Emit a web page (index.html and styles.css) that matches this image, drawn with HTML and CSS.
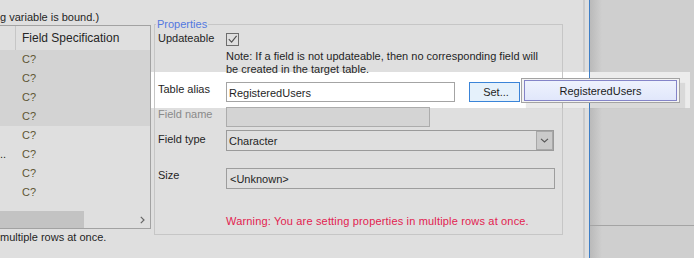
FILE: index.html
```html
<!DOCTYPE html>
<html>
<head>
<meta charset="utf-8">
<link rel="stylesheet" href="styles.css">
</head>
<body>
<div class="screen">
  <div class="dialog">
    <div class="content">
      <div class="left">
        <div class="hint">g variable is bound.)</div>
        <div class="table">
          <div class="thead"><div class="c1"></div><div class="c2">Field Specification</div></div>
          <div class="tr sel"><div class="c1"></div><div class="c2">C?</div></div>
          <div class="tr sel"><div class="c1"></div><div class="c2">C?</div></div>
          <div class="tr sel"><div class="c1"></div><div class="c2">C?</div></div>
          <div class="tr sel"><div class="c1"></div><div class="c2">C?</div></div>
          <div class="tr"><div class="c1"></div><div class="c2">C?</div></div>
          <div class="tr"><div class="c1">..</div><div class="c2">C?</div></div>
          <div class="tr"><div class="c1"></div><div class="c2">C?</div></div>
          <div class="tr"><div class="c1"></div><div class="c2">C?</div></div>
          <div class="filler"></div>
          <div class="hscroll">
            <div class="thumb"></div>
            <svg class="arrow" width="5" height="8" viewBox="0 0 5 8"><path d="M0.8 0.8 L4 4 L0.8 7.2" fill="none" stroke="#666" stroke-width="1.2"/></svg>
          </div>
        </div>
        <div class="status">multiple rows at once.</div>
      </div>
      <fieldset class="props">
        <legend>Properties</legend>
        <div class="row r-upd">
          <span class="lbl">Updateable</span>
          <span class="chk"><svg width="11" height="11" viewBox="0 0 11 11"><path d="M1.8 5.2 L4.6 8.2 L9.6 1.8" fill="none" stroke="#505050" stroke-width="1.1"/></svg></span>
        </div>
        <div class="row r-note">
          <span></span>
          <p class="note">Note: If a field is not updateable, then no corresponding field will<br>be created in the target table.</p>
        </div>
        <div class="row r-alias">
          <span class="lbl">Table alias</span>
          <div class="ctrl">
            <div class="input alias">RegisteredUsers</div>
            <div class="btn">Set...</div>
          </div>
        </div>
        <div class="row r-name">
          <span class="lbl dis">Field name</span>
          <div class="input disabled"></div>
        </div>
        <div class="row r-type">
          <span class="lbl">Field type</span>
          <div class="combo">
            <span class="val">Character</span>
            <span class="drop"><svg width="9" height="5" viewBox="0 0 9 5"><path d="M1 0.8 L4.5 4 L8 0.8" fill="none" stroke="#555" stroke-width="1.1"/></svg></span>
          </div>
        </div>
        <div class="row r-size">
          <span class="lbl">Size</span>
          <div class="input size">&lt;Unknown&gt;</div>
        </div>
        <div class="row r-warn">
          <span></span>
          <p class="warn">Warning: You are setting properties in multiple rows at once.</p>
        </div>
      </fieldset>
    </div>
    <div class="splitter"></div>
    <div class="edge"></div>
  </div>
  <div class="backwin">
    <div class="bw-top"></div>
    <div class="bw-bottom"></div>
  </div>
</div>
<div class="spotlight"></div>
<div class="popup"><div class="popup-inner">RegisteredUsers</div></div>
</body>
</html>
```

FILE: styles.css
```css
html, body {
  margin: 0;
  padding: 0;
}
body {
  width: 694px;
  height: 258px;
  overflow: hidden;
  position: relative;
  font-family: "Liberation Sans", Arial, sans-serif;
  font-size: 11px;
  color: #1f1f1f;
}
.screen {
  display: flex;
  width: 694px;
  height: 258px;
  background: #dfdfdf;
}
.dialog {
  display: flex;
  flex: none;
  width: 590px;
}
.content {
  position: relative;
  z-index: 1;
  width: 583px;
  flex: none;
  display: grid;
  grid-template-columns: 151px 409px;
  column-gap: 3px;
  align-items: start;
}
.splitter {
  width: 2px;
  background: #cbcbcb;
  flex: none;
}
.edge {
  width: 1px;
  margin-left: 4px;
  background: #3f7fc6;
  position: relative;
  z-index: 1;
  flex: none;
}
.backwin {
  flex: 1;
  display: flex;
  flex-direction: column;
  background: linear-gradient(to right, #bababa, #cfcfcf 12px);
}
.bw-top {
  height: 225px;
  border-bottom: 1px solid #a4a4a4;
  flex: none;
}
.bw-bottom {
  flex: 1;
}

/* left table */
.left {
  display: flex;
  flex-direction: column;
}
.hint {
  padding-top: 9px;
  height: 16px;
  line-height: 16px;
  white-space: nowrap;
}
.table {
  height: 204px;
  box-sizing: border-box;
  border: 1px solid #a2a2a2;
  border-left: 0;
  display: flex;
  flex-direction: column;
}
.thead {
  height: 24px;
  line-height: 24px;
  display: flex;
  flex: none;
  color: #262626;
  font-size: 12px;
}
.thead .c1 {
  width: 15px;
  border-right: 1px solid #c6c6c6;
}
.thead .c2 {
  padding-left: 6px;
  white-space: nowrap;
}
.tr {
  height: 19px;
  line-height: 19px;
  display: flex;
  flex: none;
}
.tr.sel {
  background: #d3d3d3;
}
.tr .c1 {
  width: 16px;
  overflow: hidden;
  white-space: nowrap;
}
.tr .c2 {
  padding-left: 6px;
  color: #5e5634;
}
.filler {
  flex: 1;
}
.hscroll {
  height: 17px;
  flex: none;
  display: flex;
  align-items: center;
  justify-content: space-between;
}
.thumb {
  width: 84px;
  height: 17px;
  background: #c3c3c3;
}
.arrow {
  margin-right: 5px;
}
.status {
  height: 16px;
  line-height: 16px;
  white-space: nowrap;
}

/* properties */
.props {
  margin: 17px 0 0 0;
  padding: 0 0 6px 3px;
  border: 1px solid #c6c6c6;
  width: 409px;
  box-sizing: border-box;
  min-inline-size: 0;
}
.props legend {
  padding: 0 1px;
  margin-left: -2px;
  line-height: 14px;
  color: #5378e0;
}
.row {
  display: grid;
  grid-template-columns: 68px auto;
  align-items: start;
}
.lbl {
  line-height: 14px;
  white-space: nowrap;
}
.lbl.dis {
  color: #8a8a8a;
}
.r-upd {
  height: 16px;
}
.chk {
  display: block;
  width: 13px;
  height: 13px;
  box-sizing: border-box;
  border: 1px solid #6d6d6d;
  margin-top: 2px;
}
.chk svg {
  display: block;
}
.r-note {
  margin-top: 3px;
}
.note {
  margin: 0;
  line-height: 13px;
  white-space: nowrap;
}
.r-alias {
  margin-top: 6px;
}
.r-name {
  margin-top: 5px;
}
.r-type {
  margin-top: 3px;
}
.r-type .lbl {
  padding-top: 2px;
}
.r-size {
  margin-top: 17px;
}
.r-warn {
  margin-top: 25px;
}
.warn {
  margin: 0;
  line-height: 14px;
  color: #e2224f;
  white-space: nowrap;
  letter-spacing: 0.17px;
}
.ctrl {
  display: flex;
  gap: 14px;
}
.input {
  box-sizing: border-box;
  height: 20px;
  border: 1px solid #9d9d9d;
  padding-left: 2px;
  line-height: 18px;
  white-space: nowrap;
}
.alias {
  width: 229px;
  background: #fff;
  border-color: #a4a4a4;
  padding-top: 1px;
}
.btn {
  box-sizing: border-box;
  width: 51px;
  height: 20px;
  border: 1px solid #3a84d8;
  background: #e5f1fb;
  text-align: center;
  line-height: 19px;
  padding-left: 3px;
}
.disabled {
  width: 204px;
  background: #d4d4d4;
  border-color: #acacac;
}
.combo {
  box-sizing: border-box;
  width: 328px;
  height: 21px;
  border: 1px solid #9a9a9a;
  display: flex;
}
.combo .val {
  flex: 1;
  padding-left: 2px;
  line-height: 20px;
}
.drop {
  width: 17px;
  box-sizing: border-box;
  border: 1px solid #a8a8a8;
  background: #cacaca;
  display: flex;
  align-items: center;
  justify-content: center;
}
.size {
  width: 329px;
  height: 21px;
  line-height: 20px;
  padding-left: 3px;
}

/* overlays */
.spotlight {
  position: absolute;
  left: 147px;
  top: 72px;
  width: 543px;
  height: 36px;
  z-index: 0;
  background: linear-gradient(to right, #ffffff 442px, #ececec 442px);
}
.popup {
  position: absolute;
  z-index: 2;
  left: 521px;
  top: 78px;
  width: 159px;
  height: 25px;
  box-sizing: border-box;
  border: 1px solid #a3a3a3;
  background: #f3f3f3;
  padding: 1px 2px;
  box-shadow: 5px 5px 1px rgba(0, 0, 0, 0.08);
}
.popup-inner {
  height: 100%;
  box-sizing: border-box;
  border: 1px solid #8484c8;
  background: linear-gradient(#eef2fd, #e1e7fb);
  text-align: center;
  line-height: 20px;
  color: #1b1b1b;
}
```
